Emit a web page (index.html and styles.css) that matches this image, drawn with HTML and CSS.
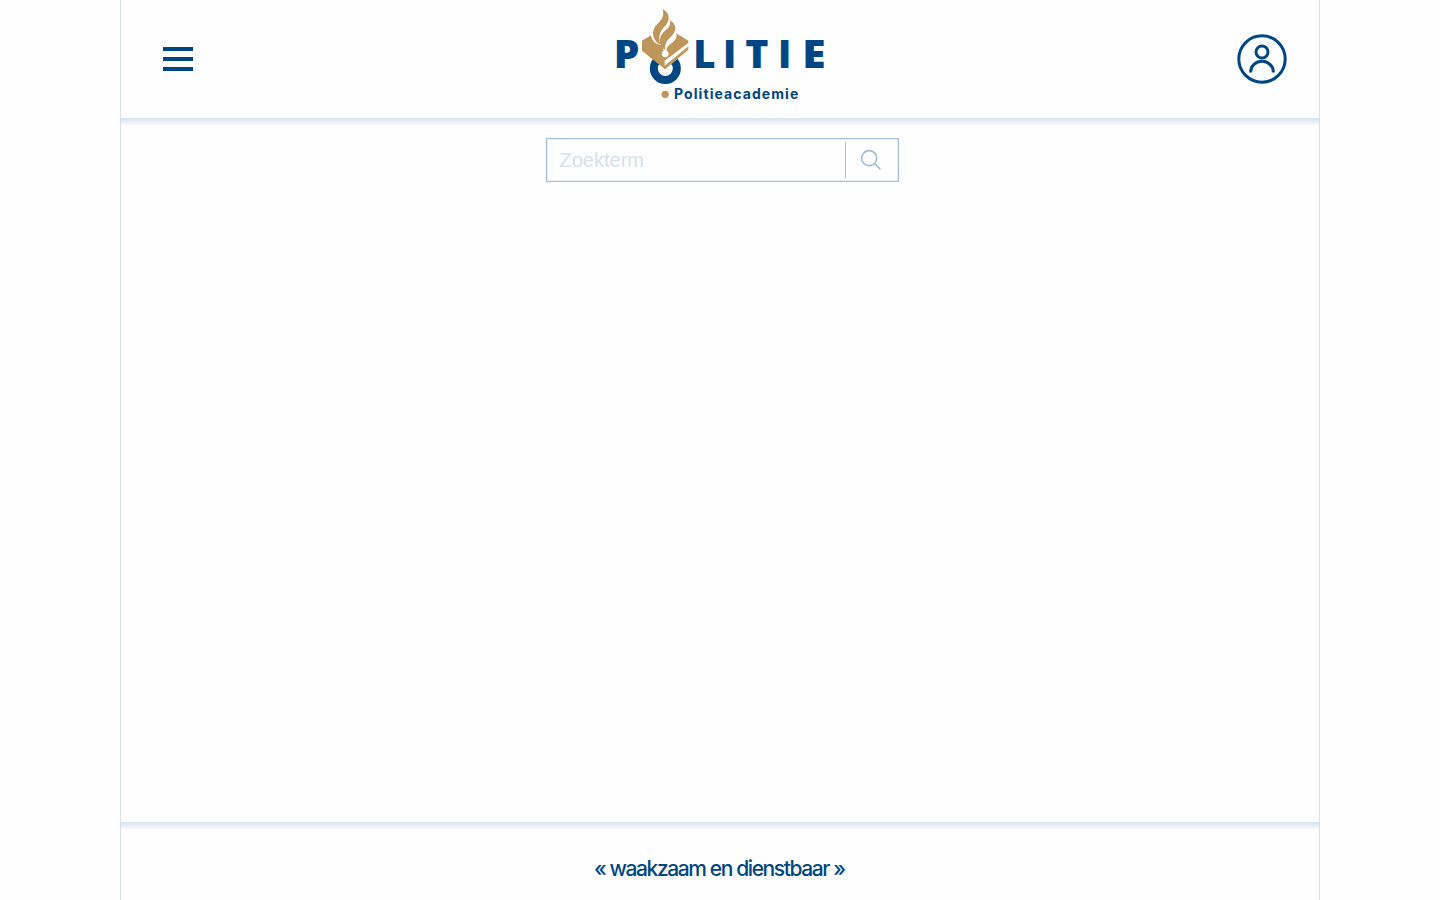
FILE: index.html
```html
<!DOCTYPE html>
<html lang="nl">
<head>
<meta charset="utf-8">
<title>Politieacademie</title>
<link rel="stylesheet" href="styles.css">
</head>
<body>
<div class="page">
  <header class="header">
    <button class="menu" aria-label="Menu"><span></span><span></span><span></span></button>
    <svg class="logo" viewBox="0 0 660 330" role="img" aria-label="Politie Politieacademie">
      <circle class="ring" cx="166" cy="205.500" r="34.500"/>
      <path class="edge" d="M97 123L165 208L234 149V122Z"/>
      <path class="gold" d="M96 122L123 106L132 121L152 104L196 98L235 122V129L164 182V197L235 139V149L165 208L96 152Z"/>
      <path class="cut" d="M123 106C124 116 130 126 141 132L156 136C157 142 159 147 161 152A10.500 10.500 0 1 0 170 152C168 144 174 138 184 130C198 120 203 109 198 98L170 80L135 90Z"/>
      <path class="flame" d="M158 27C180 39 181 60 167 76C151 93 143 108 151 134C127 122 124 96 136 79C147 65 166 55 158 27Z"/>
      <path class="flame" d="M179 61C198 71 203 91 185 108C170 122 163 133 165 151C148 138 144 116 158 99C171 86 185 80 179 61Z"/>
      <g class="word">
        <text transform="translate(11.500 205) scale(1.060 1)">P</text>
        <text transform="translate(250 205)">L</text>
        <text transform="translate(339 205)">I</text>
        <text transform="translate(406 205) scale(1.025 1)">T</text>
        <text transform="translate(504 205)">I</text>
        <text transform="translate(577 205) scale(1.110 1)">E</text>
      </g>
      <circle class="flame" cx="165.500" cy="283" r="11"/>
      <text class="sub" x="192" y="297" textLength="373">Politieacademie</text>
    </svg>
    <svg class="user" viewBox="0 0 50 50" role="img" aria-label="Account">
      <circle cx="25" cy="25" r="23.200"/><circle cx="25" cy="18" r="6"/><path d="M13.700 38.500V37.500A11.300 10.200 0 0 1 36.300 37.500V38.500"/>
    </svg>
  </header>
  <main class="main">
    <form class="search">
      <input type="text" placeholder="Zoekterm">
      <button type="button" aria-label="Zoeken"><svg viewBox="0 0 22 22"><circle cx="9.200" cy="9.200" r="7.500"/><path d="M14.500 14.500L20.500 20.500"/></svg></button>
    </form>
  </main>
  <footer class="footer">
    <svg class="motto" viewBox="0 0 260 36"><text x="4" y="25" textLength="252" lengthAdjust="spacing">« waakzaam en dienstbaar »</text></svg>
  </footer>
</div>
</body>
</html>
```
FILE: styles.css
```css
* { box-sizing: border-box; }
body { margin: 0; background: #fefefe; font-family: "Liberation Sans", Arial, sans-serif; color: #004682; }
.page { width: 1200px; height: 900px; margin: 0 auto; display: flex; flex-direction: column; border: solid #d7e1eb; border-width: 0 1px; background: #fefefe; }
.header { height: 118px; flex: none; display: grid; grid-template-columns: 1fr 220px 1fr; background: #fefefe; }
.menu { width: 30px; height: 24px; margin: 47px 0 0 42px; padding: 0; border: 0; background: none; display: flex; flex-direction: column; justify-content: space-between; }
.menu span { width: 30px; height: 4px; background: #004682; }
.logo { width: 220px; height: 110px; }
.user { width: 50px; height: 50px; margin: 34px 32px 0 0; justify-self: end; fill: none; stroke: #004682; stroke-width: 3; }
.ring { fill: none; stroke: #004682; stroke-width: 24; }
.edge, .cut { fill: #fff; }
.gold, .flame { fill: #bf965a; }
.word { font: 800 115px "Open Sans", "Noto Sans", sans-serif; fill: #004682; }
.sub { font: 700 42px Inter, sans-serif; fill: #004682; }
.main { flex: 1; background: linear-gradient(#d7e1eb, #fefefe 8px); }
.search { width: 353px; height: 44px; margin: 20px 0 0 425px; border: 1px solid #a0bed7; box-shadow: inset 0 0 0 1px #ebf1f7; display: flex; align-items: center; background: #fefefe; }
.search input { width: 298px; height: 38px; padding: 0 0 0 12.500px; border: 0; outline: 0; background: none; font: 20px "Liberation Sans", Arial, sans-serif; }
.search input::placeholder { color: #d7e1eb; opacity: 1; }
.search button { width: 52px; height: 36px; padding: 0 0 0 14px; border: 0; border-left: 1px solid #a0bed7; background: none; display: flex; align-items: center; }
.search svg { width: 22px; height: 22px; fill: none; stroke: #a0bed7; stroke-width: 1.7; }
.footer { height: 78px; flex: none; display: flex; justify-content: center; padding-top: 29px; background: linear-gradient(#d7e1eb, #fefefe 8px); }
.motto { width: 260px; height: 36px; font: 450 21px Inter, sans-serif; fill: #004682; }
```
